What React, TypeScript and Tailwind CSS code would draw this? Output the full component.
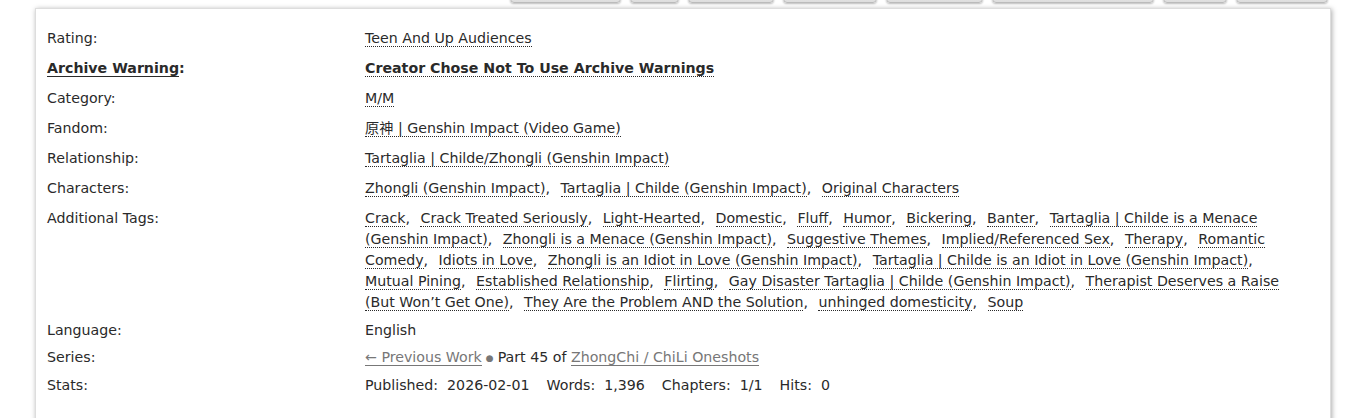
import React from "react";

const font = { fontFamily: '"DejaVu Sans", "Noto Sans CJK SC", Verdana, sans-serif' };

function Tag({ children, bold }: { children: React.ReactNode; bold?: boolean }) {
  return (
    <a className={"border-b border-dotted border-[#2a2a2a] text-[#2a2a2a] " + (bold ? "font-bold" : "")}>
      {children}
    </a>
  );
}

function TagList({ items }: { items: string[] }) {
  return (
    <>
      {items.map((t, i) => (
        <React.Fragment key={i}>
          <Tag>{t}</Tag>
          {i < items.length - 1 && <span className="mr-[6px]">,</span>}
          {i < items.length - 1 && " "}
        </React.Fragment>
      ))}
    </>
  );
}

const tags = [
  "Crack",
  "Crack Treated Seriously",
  "Light-Hearted",
  "Domestic",
  "Fluff",
  "Humor",
  "Bickering",
  "Banter",
  "Tartaglia | Childe is a Menace (Genshin Impact)",
  "Zhongli is a Menace (Genshin Impact)",
  "Suggestive Themes",
  "Implied/Referenced Sex",
  "Therapy",
  "Romantic Comedy",
  "Idiots in Love",
  "Zhongli is an Idiot in Love (Genshin Impact)",
  "Tartaglia | Childe is an Idiot in Love (Genshin Impact)",
  "Mutual Pining",
  "Established Relationship",
  "Flirting",
  "Gay Disaster Tartaglia | Childe (Genshin Impact)",
  "Therapist Deserves a Raise (But Won’t Get One)",
  "They Are the Problem AND the Solution",
  "unhinged domesticity",
  "Soup",
];

const navButtons = [111, 49, 86, 94, 97, 162, 64, 92];

function Row({ label, children, mb = "mb-[9px]" }: { label: React.ReactNode; children: React.ReactNode; mb?: string }) {
  return (
    <div className={"grid grid-cols-[318px_922px] " + mb}>
      <div className="text-[#2a2a2a]">{label}</div>
      <div className="text-[#2a2a2a]">{children}</div>
    </div>
  );
}

export default function App() {
  return (
    <div className="min-h-screen bg-white text-[14.2px] leading-[21px] overflow-hidden" style={font}>
      {/* action buttons peeking from above */}
      <div className="flex justify-end gap-[9px] pr-[38px] -mt-[18px] h-[21px]">
        {navButtons.map((w, i) => (
          <div
            key={i}
            style={{ width: w }}
            className="h-[21px] rounded-b-[4px] border border-[#bbb] bg-gradient-to-b from-[#fff] to-[#ddd] shadow-[0_1px_2px_#bbb]"
          />
        ))}
      </div>

      <div className="mx-[35px] mt-[5px] border border-[#ddd] shadow-[1px_1px_5px_#aaa] pl-[11px] pt-[19px] pb-[40px]">
        <Row label="Rating:">
          <Tag>Teen And Up Audiences</Tag>
        </Row>
        <Row
          label={
            <span className="font-bold">
              <a className="border-b border-[#2a2a2a]">Archive Warning</a>:
            </span>
          }
        >
          <Tag bold>Creator Chose Not To Use Archive Warnings</Tag>
        </Row>
        <Row label="Category:">
          <Tag>M/M</Tag>
        </Row>
        <Row label="Fandom:">
          <Tag>原神 | Genshin Impact (Video Game)</Tag>
        </Row>
        <Row label="Relationship:">
          <Tag>Tartaglia | Childe/Zhongli (Genshin Impact)</Tag>
        </Row>
        <Row label="Characters:">
          <TagList items={["Zhongli (Genshin Impact)", "Tartaglia | Childe (Genshin Impact)", "Original Characters"]} />
        </Row>
        <Row label="Additional Tags:" mb="mb-[7px]">
          <TagList items={tags} />
        </Row>
        <Row label="Language:" mb="mb-[6px]">
          English
        </Row>
        <Row label="Series:" mb="mb-[6px]">
          <a className="text-[#777] border-b border-[#777]">← Previous Work</a>
          <span className="text-[#777] text-[9px] mx-[4px] align-[1px]">●</span>
          Part 45 of{" "}
          <a className="text-[#777] border-b border-[#777]">ZhongChi / ChiLi Oneshots</a>
        </Row>
        <Row label="Stats:">
          <span className="flex">
            <span>Published:</span>
            <span className="ml-[9px] mr-[17px]">2026-02-01</span>
            <span>Words:</span>
            <span className="ml-[9px] mr-[17px]">1,396</span>
            <span>Chapters:</span>
            <span className="ml-[9px] mr-[17px]">1/1</span>
            <span>Hits:</span>
            <span className="ml-[9px]">0</span>
          </span>
        </Row>
      </div>
    </div>
  );
}
